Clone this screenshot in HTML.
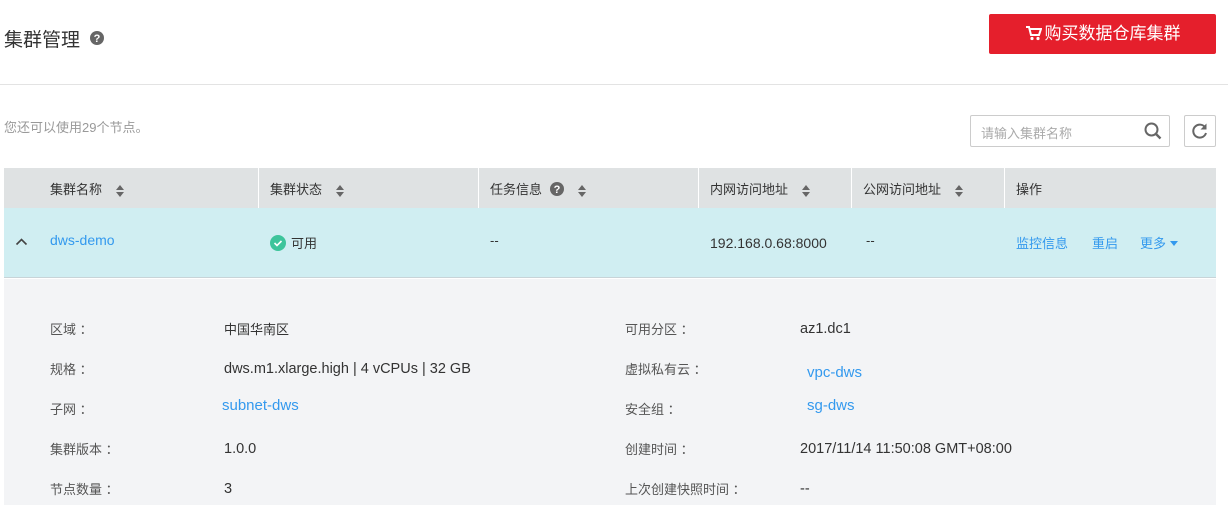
<!DOCTYPE html>
<html><head><meta charset="utf-8"><style>
*{margin:0;padding:0;box-sizing:border-box}
body{width:1228px;height:505px;background:#fff;font-family:"Liberation Sans","Noto Sans CJK SC",sans-serif;position:relative;overflow:hidden;color:#333;font-size:14px}
.a{position:absolute;white-space:nowrap}
.lnk{color:#3399ee}
.sort{display:inline-block;width:8px;height:12px;vertical-align:middle;margin-left:14px}
.th{top:179px;font-size:13px;color:#333}
.sep{position:absolute;top:168px;width:1px;height:40px;background:#fff}
.lab{color:#555;font-size:13px}
</style></head><body>
<div class="a" style="left:4px;top:25px;font-size:19px;color:#333">集群管理</div>
<svg class="a" style="left:90px;top:31px" width="14" height="14" viewBox="0 0 14 14"><circle cx="7" cy="7" r="7" fill="#666"/><text x="7" y="11" font-size="11" font-weight="bold" text-anchor="middle" fill="#fff" font-family="Liberation Sans">?</text></svg>
<div class="a" style="left:989px;top:14px;width:227px;height:40px;background:#e51f2c;border-radius:2px;color:#fff;font-size:17px;line-height:40px;text-align:center">
<svg style="vertical-align:-2px;margin-right:3px" width="17" height="16" viewBox="0 0 17 16"><path d="M1 2h3l2 8h8l2-6H5" fill="none" stroke="#fff" stroke-width="2"/><circle cx="7" cy="13.5" r="1.6" fill="#fff"/><circle cx="13" cy="13.5" r="1.6" fill="#fff"/></svg>购买数据仓库集群</div>
<div class="a" style="left:0;top:84px;width:1228px;height:1px;background:#e3e3e3"></div>
<div class="a" style="left:4px;top:117px;font-size:13px;color:#999">您还可以使用29个节点。</div>
<div class="a" style="left:970px;top:115px;width:200px;height:32px;border:1px solid #ccc;border-radius:2px;font-size:13px;color:#aaa;padding:7px 10px">请输入集群名称</div>
<svg class="a" style="left:1143px;top:121px" width="20" height="20" viewBox="0 0 20 20"><circle cx="8.5" cy="8.5" r="6" fill="none" stroke="#666" stroke-width="2"/><path d="M13 13l4.5 4.5" stroke="#666" stroke-width="2.4"/></svg>
<div class="a" style="left:1184px;top:115px;width:32px;height:32px;border:1px solid #ccc;border-radius:2px"></div>
<svg class="a" style="left:1190px;top:121px" width="20" height="20" viewBox="0 0 20 20"><path d="M15.5 7A6.5 6.5 0 1 0 16 12" fill="none" stroke="#666" stroke-width="2"/><path d="M16.5 2.5v6h-6z" fill="#666"/></svg>

<div class="a" style="left:4px;top:168px;width:1212px;height:40px;background:#dfe2e3"></div>
<div class="sep" style="left:258px"></div><div class="sep" style="left:478px"></div><div class="sep" style="left:698px"></div><div class="sep" style="left:851px"></div><div class="sep" style="left:1004px"></div>
<svg width="0" height="0" style="position:absolute"><defs><g id="s"><path d="M4 0L8 5H0z M0 7h8L4 12z" fill="#666"/></g></defs></svg>
<div class="a th" style="left:50px">集群名称<svg class="sort"><use href="#s"/></svg></div>
<div class="a th" style="left:270px">集群状态<svg class="sort"><use href="#s"/></svg></div>
<div class="a th" style="left:490px">任务信息 <svg style="vertical-align:-2px;margin-left:4px" width="14" height="14" viewBox="0 0 14 14"><circle cx="7" cy="7" r="7" fill="#666"/><text x="7" y="11" font-size="11" font-weight="bold" text-anchor="middle" fill="#fff" font-family="Liberation Sans">?</text></svg><svg class="sort"><use href="#s"/></svg></div>
<div class="a th" style="left:710px">内网访问地址<svg class="sort"><use href="#s"/></svg></div>
<div class="a th" style="left:863px">公网访问地址<svg class="sort"><use href="#s"/></svg></div>
<div class="a th" style="left:1016px">操作</div>

<div class="a" style="left:4px;top:208px;width:1212px;height:70px;background:#d0eef2;border-bottom:1px solid #c8d4d8"></div>
<svg class="a" style="left:15px;top:237px" width="13" height="10" viewBox="0 0 13 10"><path d="M1.5 7.5L6.5 2.5l5 5" fill="none" stroke="#444" stroke-width="1.6"/></svg>
<div class="a lnk" style="left:50px;top:232px;font-size:14px">dws-demo</div>
<svg class="a" style="left:270px;top:235px" width="16" height="16" viewBox="0 0 16 16"><circle cx="8" cy="8" r="8" fill="#3dc49b"/><path d="M4.5 8l2.5 2.5 4.5-4.5" fill="none" stroke="#fff" stroke-width="1.6"/></svg>
<div class="a" style="left:291px;top:233px;font-size:13px">可用</div>
<div class="a" style="left:490px;top:233px;font-size:13px">--</div>
<div class="a" style="left:710px;top:235px;font-size:14px">192.168.0.68:8000</div>
<div class="a" style="left:866px;top:233px;font-size:13px">--</div>
<div class="a lnk" style="left:1016px;top:233px;font-size:13px">监控信息</div>
<div class="a lnk" style="left:1092px;top:233px;font-size:13px">重启</div>
<div class="a lnk" style="left:1140px;top:233px;font-size:13px">更多 <span style="display:inline-block;border-left:4px solid transparent;border-right:4px solid transparent;border-top:5px solid #3399ee;vertical-align:2px"></span></div>

<div class="a" style="left:4px;top:279px;width:1212px;height:226px;background:#f3f4f6"></div>
<div class="a lab" style="left:50px;top:319px">区域&nbsp;：</div><div class="a" style="left:224px;top:319px;font-size:13px">中国华南区</div>
<div class="a lab" style="left:50px;top:359px">规格&nbsp;：</div><div class="a" style="left:224px;top:361px;font-size:14.5px">dws.m1.xlarge.high | 4 vCPUs | 32 GB</div>
<div class="a lab" style="left:50px;top:399px">子网&nbsp;：</div><div class="a lnk" style="left:222px;top:397px;font-size:15px">subnet-dws</div>
<div class="a lab" style="left:50px;top:439px">集群版本&nbsp;：</div><div class="a" style="left:224px;top:441px;font-size:14.5px">1.0.0</div>
<div class="a lab" style="left:50px;top:479px">节点数量&nbsp;：</div><div class="a" style="left:224px;top:481px;font-size:14.5px">3</div>
<div class="a lab" style="left:625px;top:319px">可用分区&nbsp;：</div><div class="a" style="left:800px;top:321px;font-size:14.5px">az1.dc1</div>
<div class="a lab" style="left:625px;top:359px">虚拟私有云&nbsp;：</div><div class="a lnk" style="left:807px;top:364px;font-size:15px">vpc-dws</div>
<div class="a lab" style="left:625px;top:399px">安全组&nbsp;：</div><div class="a lnk" style="left:807px;top:397px;font-size:15px">sg-dws</div>
<div class="a lab" style="left:625px;top:439px">创建时间&nbsp;：</div><div class="a" style="left:800px;top:441px;font-size:14.5px">2017/11/14 11:50:08 GMT+08:00</div>
<div class="a lab" style="left:625px;top:479px">上次创建快照时间&nbsp;：</div><div class="a" style="left:800px;top:481px;font-size:14.5px">--</div>
</body></html>
